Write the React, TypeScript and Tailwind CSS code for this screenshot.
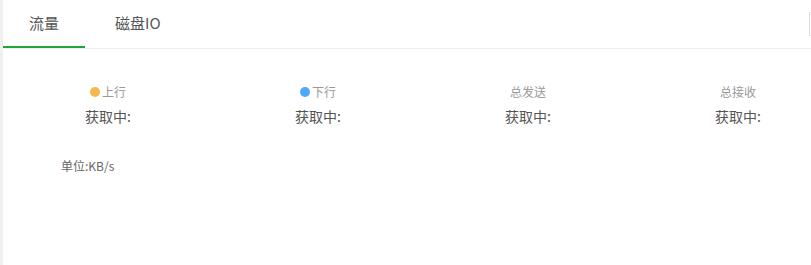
import { useState } from "react";

const font = "font-['Noto_Sans_CJK_SC','Noto_Sans',sans-serif]";

export default function App() {
  const [tab, setTab] = useState(0);
  const tabs = ["流量", "磁盘IO"];

  const stats = [
    { label: "上行", dot: "bg-[#f7b851]" },
    { label: "下行", dot: "bg-[#52a8ff]" },
    { label: "总发送", dot: "" },
    { label: "总接收", dot: "" },
  ];

  return (
    <div className={`flex h-[265px] w-[811px] overflow-hidden bg-white ${font}`}>
      <div className="w-[3px] shrink-0 bg-[#f0f0f0]" />
      <div className="w-[840px] shrink-0">
        {/* Tabs */}
        <div className="flex h-[49px] items-start border-b border-[#eeeeee]">
          {tabs.map((t, i) => (
            <button
              key={t}
              onClick={() => setTab(i)}
              className={`flex h-[48px] items-center border-b-2 text-[15px] leading-none text-[#555] ${
                i === 0 ? "w-[82px] justify-center" : "pl-[30px] pr-[20px]"
              } ${tab === i ? "border-[#20a53a]" : "border-transparent"}`}
            >
              <span className="-mt-[1px]">{t}</span>
            </button>
          ))}
          <div className="ml-auto mt-[12px] h-[24px] w-[34px] rounded-l-[2px] border border-r-0 border-[#dddddd]" />
        </div>

        {/* Stats */}
        <div className="grid grid-cols-4 pt-[35px]">
          {stats.map((s) => (
            <div key={s.label} className="flex w-[210px] flex-col items-center">
              <div className="flex h-[16px] items-center gap-[2px] text-[12px] text-[#999]">
                {s.dot && <span className={`h-[10px] w-[10px] rounded-full ${s.dot}`} />}
                <span>{s.label}</span>
              </div>
              <div className="mt-[7px] text-[14px] leading-[18px] text-[#555]">获取中:</div>
            </div>
          ))}
        </div>

        <div className="mt-[33px] pl-[58px] text-[12px] leading-[16px] text-[#666]">单位:KB/s</div>
      </div>
    </div>
  );
}
